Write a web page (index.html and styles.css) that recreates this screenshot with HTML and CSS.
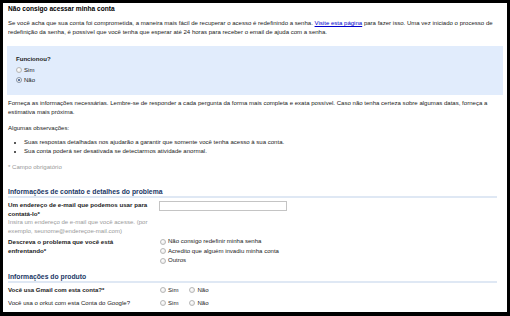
FILE: index.html
```html
<!DOCTYPE html>
<html lang="pt-BR">
<head>
    <meta charset="UTF-8">
    <title>Não consigo acessar minha conta</title>
    <link rel="stylesheet" href="styles.css">
</head>
<body>
<div class="page">
    <h1 class="title">Não consigo acessar minha conta</h1>
    <p class="text intro">
        Se você acha que sua conta foi comprometida, a maneira mais fácil de recuperar o acesso é redefinindo a senha. <a href="#">Visite esta página</a> para fazer isso. Uma vez iniciado o processo de redefinição da senha, é possível que você tenha que esperar até 24 horas para receber o email de ajuda com a senha.
    </p>

    <div class="box">
        <div class="box-title">Funcionou?</div>
        <label class="option"><span class="radio"></span>Sim</label>
        <label class="option"><span class="radio checked"></span>Não</label>
    </div>

    <p class="text help">
        Forneça as informações necessárias. Lembre-se de responder a cada pergunta da forma mais completa e exata possível. Caso não tenha certeza sobre algumas datas, forneça a estimativa mais próxima.
    </p>
    <p class="text notes">Algumas observações:</p>
    <ul class="text list">
        <li>Suas respostas detalhadas nos ajudarão a garantir que somente você tenha acesso à sua conta.</li>
        <li>Sua conta poderá ser desativada se detectarmos atividade anormal.</li>
    </ul>
    <p class="text required">* Campo obrigatório</p>

    <h2 class="section first">Informações de contato e detalhes do problema</h2>
    <div class="row email">
        <div class="label">
            <div class="strong">Um endereço de e-mail que podemos usar para contatá-lo*</div>
            <div class="hint">Insira um endereço de e-mail que você acesse. (por exemplo, seunome@endereçoe-mail.com)</div>
        </div>
        <div class="field"><input class="input" type="text"></div>
    </div>
    <div class="row problem">
        <div class="label">
            <div class="strong">Descreva o problema que você está enfrentando*</div>
        </div>
        <div class="field options">
            <label class="option"><span class="radio"></span>Não consigo redefinir minha senha</label>
            <label class="option"><span class="radio"></span>Acredito que alguém invadiu minha conta</label>
            <label class="option"><span class="radio"></span>Outros</label>
        </div>
    </div>

    <h2 class="section second">Informações do produto</h2>
    <div class="row yesno gmail">
        <div class="label strong">Você usa Gmail com esta conta?*</div>
        <div class="field inline">
            <label class="option"><span class="radio"></span>Sim</label>
            <label class="option"><span class="radio"></span>Não</label>
        </div>
    </div>
    <div class="row yesno orkut">
        <div class="label">Você usa o orkut com esta Conta do Google?</div>
        <div class="field inline">
            <label class="option"><span class="radio"></span>Sim</label>
            <label class="option"><span class="radio"></span>Não</label>
        </div>
    </div>
</div>
</body>
</html>
```

FILE: styles.css
```css
html, body {
    margin: 0;
    padding: 0;
    background: #000;
}

body {
    height: 316px;
    overflow: hidden;
    font-family: "Liberation Sans", Arial, sans-serif;
    font-size: 6.05px;
    line-height: 9px;
    color: #222;
}

.page {
    margin: 3px 3px 0 3px;
    height: 309px;
    background: #fff;
    padding: 1px 4px 0 5px;
    box-sizing: border-box;
    overflow: hidden;
}

.title {
    margin: 0;
    font-size: 6.6px;
    font-weight: bold;
    line-height: 10px;
    color: #000;
}

.text {
    margin: 0;
}

.intro {
    margin-top: 5px;
}

a {
    color: #00c;
}

.box {
    margin: 9px 0 0 -1px;
    padding: 9px 9px 10px;
    background: #e1ecfc;
    display: flex;
    flex-direction: column;
}

.box-title {
    font-weight: bold;
    margin-bottom: 1px;
}

.box .option {
    line-height: 10px;
}

.option {
    display: flex;
    align-items: center;
    gap: 2px;
    white-space: nowrap;
}

.radio {
    display: inline-block;
    width: 4px;
    height: 4px;
    border: 1px solid #b8b8b8;
    border-radius: 50%;
    background: radial-gradient(circle at 40% 35%, #fff, #e2e2e2);
    position: relative;
}

.radio.checked {
    border-color: #8a96a8;
}

.radio.checked::after {
    content: "";
    position: absolute;
    left: 1px;
    top: 1px;
    width: 2px;
    height: 2px;
    border-radius: 50%;
    background: #2a4a80;
}

.help {
    margin-top: 4px;
}

.notes {
    margin-top: 7px;
}

.list {
    margin-top: 5px;
    padding-left: 16px;
}

.required {
    margin-top: 7px;
    color: #9a9a9a;
}

.section {
    margin: 15px 6px 0 0;
    border-bottom: 2px solid #dfe8f4;
    font-size: 6.8px;
    line-height: 9px;
    font-weight: bold;
    color: #1a3766;
}

.section.second {
    margin-top: 7px;
    line-height: 8px;
}

.row {
    display: grid;
    grid-template-columns: 150px 1fr;
}

.strong {
    font-weight: bold;
}

.label {
    padding-right: 7px;
    line-height: 8.5px;
}

.label .strong {
    font-size: 6.2px;
}

.hint {
    color: #9a9a9a;
}

.email {
    margin-top: 3px;
}

.input {
    display: block;
    width: 128px;
    height: 10px;
    margin: 0 0 0 1px;
    box-sizing: border-box;
    border: 1px solid #c4c4c4;
    padding: 0;
}

.problem {
    margin-top: 3px;
}

.options {
    padding-left: 2px;
    margin-top: -1px;
}

.options .option {
    line-height: 9.5px;
}

.inline {
    display: flex;
    gap: 11px;
    padding-left: 2px;
}

.gmail {
    margin-top: 3px;
}

.orkut {
    margin-top: 4px;
}
```
